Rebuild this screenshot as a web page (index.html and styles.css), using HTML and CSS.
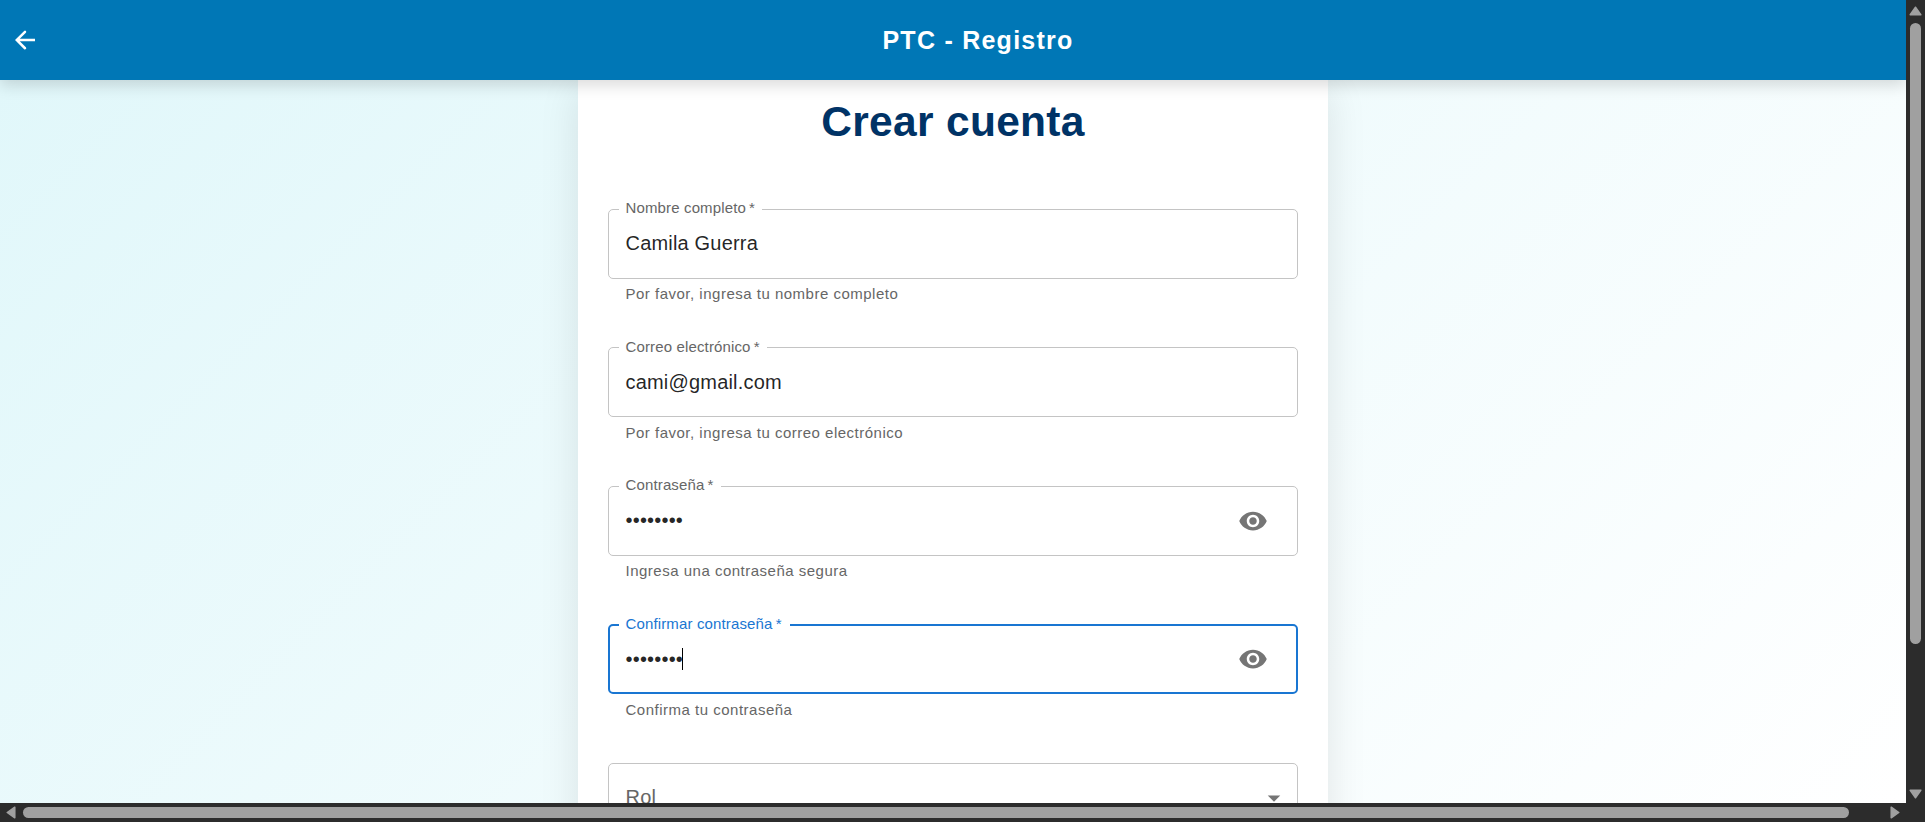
FILE: index.html
```html
<!DOCTYPE html>
<html lang="es">
<head>
<meta charset="utf-8">
<title>PTC - Registro</title>
<link rel="stylesheet" href="styles.css">
</head>
<body>
<div class="window">
  <div class="page">
    <header class="appbar">
      <button class="back" aria-label="Volver"><svg viewBox="0 0 24 24"><path d="M20 11H7.83l4.88-4.88c.39-.39.39-1.03 0-1.42a1 1 0 0 0-1.41 0L4 12l7.3 7.3a1 1 0 0 0 1.41-1.42L7.83 13H20z"/></svg></button>
      <div class="appbar-title">PTC - Registro</div>
    </header>
    <main class="content">
      <section class="card">
        <h1 class="title">Crear cuenta</h1>
        <div class="field">
          <div class="box"><label class="label">Nombre completo&thinsp;*</label><span class="value">Camila Guerra</span></div>
          <p class="helper">Por favor, ingresa tu nombre completo</p>
        </div>
        <div class="field">
          <div class="box"><label class="label">Correo electrónico&thinsp;*</label><span class="value">cami@gmail.com</span></div>
          <p class="helper">Por favor, ingresa tu correo electrónico</p>
        </div>
        <div class="field">
          <div class="box"><label class="label">Contraseña&thinsp;*</label><span class="value">••••••••</span>
            <svg class="eye" viewBox="0 0 24 24"><path d="M12 4.5C7 4.5 2.73 7.61 1 12c1.73 4.39 6 7.5 11 7.5s9.27-3.11 11-7.5c-1.73-4.39-6-7.5-11-7.5M12 17c-2.76 0-5-2.24-5-5s2.24-5 5-5 5 2.24 5 5-2.24 5-5 5m0-8c-1.66 0-3 1.34-3 3s1.34 3 3 3 3-1.34 3-3-1.34-3-3-3"/></svg>
          </div>
          <p class="helper">Ingresa una contraseña segura</p>
        </div>
        <div class="field">
          <div class="box focused"><label class="label">Confirmar contraseña&thinsp;*</label><span class="value">••••••••</span><i class="caret"></i>
            <svg class="eye" viewBox="0 0 24 24"><path d="M12 4.5C7 4.5 2.73 7.61 1 12c1.73 4.39 6 7.5 11 7.5s9.27-3.11 11-7.5c-1.73-4.39-6-7.5-11-7.5M12 17c-2.76 0-5-2.24-5-5s2.24-5 5-5 5 2.24 5 5-2.24 5-5 5m0-8c-1.66 0-3 1.34-3 3s1.34 3 3 3 3-1.34 3-3-1.34-3-3-3"/></svg>
          </div>
          <p class="helper">Confirma tu contraseña</p>
        </div>
        <div class="field">
          <div class="box select"><span class="value placeholder">Rol</span>
            <svg class="drop" viewBox="0 0 24 24"><path d="M7 10l5 5 5-5z"/></svg>
          </div>
        </div>
      </section>
    </main>
  </div>
  <div class="vbar">
    <svg class="arrow" viewBox="0 0 13 10"><path d="M6.5 1.2 11.8 8.8H1.2z"/></svg>
    <div class="vthumb"></div>
    <svg class="arrow" viewBox="0 0 13 10"><path d="M6.5 8.8 11.8 1.2H1.2z"/></svg>
  </div>
  <div class="hbar">
    <svg class="arrow-side" viewBox="0 0 10 13"><path d="M1.2 6.5 8.8 1.2V11.8z"/></svg>
    <div class="hthumb"></div>
    <svg class="arrow-side" viewBox="0 0 10 13"><path d="M8.8 6.5 1.2 1.2V11.8z"/></svg>
  </div>
</div>
</body>
</html>
```
FILE: styles.css
```css
* { box-sizing: border-box; }
body {
  margin: 0;
  overflow: hidden;
  font-family: "Liberation Sans", Arial, sans-serif;
  color: rgba(0, 0, 0, 0.87);
}
.window {
  display: grid;
  grid-template: 803px 19px / 1906px 19px;
  width: 1925px;
  height: 822px;
  background: #2c2c2c;
}
.page {
  display: flex;
  flex-direction: column;
  overflow: hidden;
  background: linear-gradient(135deg, #e0f7fa 0%, #ffffff 100%);
}
.appbar {
  position: relative;
  z-index: 2;
  display: flex;
  align-items: center;
  flex: none;
  height: 80px;
  background: #0077b6;
  color: #fff;
  box-shadow: 0 5px 15px rgba(0, 0, 0, 0.15);
}
.back {
  display: flex;
  padding: 10px;
  border: 0;
  background: none;
}
.back svg { width: 30px; height: 30px; fill: #fff; }
.appbar-title {
  flex: 1;
  text-align: center;
  font-size: 25px;
  font-weight: 700;
  line-height: 40px;
  letter-spacing: 1.25px;
}
.content {
  flex: 1;
  min-height: 0;
  display: flex;
  justify-content: center;
  align-items: flex-start;
}
.card {
  width: 750px;
  height: 900px;
  padding: 16px 30px 0;
  background: #fff;
  box-shadow: 0 10px 38px rgba(0, 0, 0, 0.1);
}
.title {
  margin: 0 0 60.25px;
  text-align: center;
  font-size: 42.5px;
  line-height: 52.5px;
  letter-spacing: 0.3125px;
  color: #003366;
}
.field { height: 138.5px; }
.box {
  position: relative;
  display: flex;
  align-items: center;
  height: 70px;
  padding: 0 29px 0 16.5px;
  border: 1px solid #c4c4c4;
  border-radius: 5px;
}
.label {
  position: absolute;
  top: -12.4px;
  left: 10px;
  padding: 0 7px 0 6.5px;
  background: #fff;
  font-size: 15px;
  line-height: 21.5px;
  letter-spacing: 0.14px;
  color: #666;
}
.value {
  font-size: 20px;
  line-height: 28.75px;
  letter-spacing: 0.1876px;
}
.placeholder { color: #666; }
.eye { width: 30px; height: 30px; margin-left: auto; fill: #757575; }
.drop { width: 30px; height: 30px; margin-left: auto; fill: #757575; }
.select { padding-right: 8px; }
.focused {
  border: 2px solid #1976d2;
  padding: 0 28px 0 15.5px;
}
.focused .label { top: -13.2px; left: 9px; padding-right: 8px; color: #1976d2; }
.caret { width: 1px; height: 22px; margin-left: -0.6px; background: #000; }
.helper {
  margin: 3.3px 17.5px 0;
  font-size: 15px;
  line-height: 24.9px;
  letter-spacing: 0.5px;
  color: #666;
}
.vbar {
  display: flex;
  flex-direction: column;
  align-items: center;
  padding: 6px 0 4px;
}
.arrow { width: 13px; height: 10px; }
.arrow-side { width: 10px; height: 13px; }
.arrow, .arrow-side {
  flex: none;
  fill: #a0a0a0;
  stroke: #a0a0a0;
  stroke-width: 1.5;
  stroke-linejoin: round;
}
.vthumb {
  width: 11px;
  height: 621px;
  margin: 7px 0 auto;
  border-radius: 6px;
  background: #a0a0a0;
}
.hbar {
  display: flex;
  align-items: center;
  padding: 0 6px;
}
.hthumb {
  width: 1826px;
  height: 11px;
  margin: 0 auto 0 7px;
  border-radius: 6px;
  background: #a0a0a0;
}
```
